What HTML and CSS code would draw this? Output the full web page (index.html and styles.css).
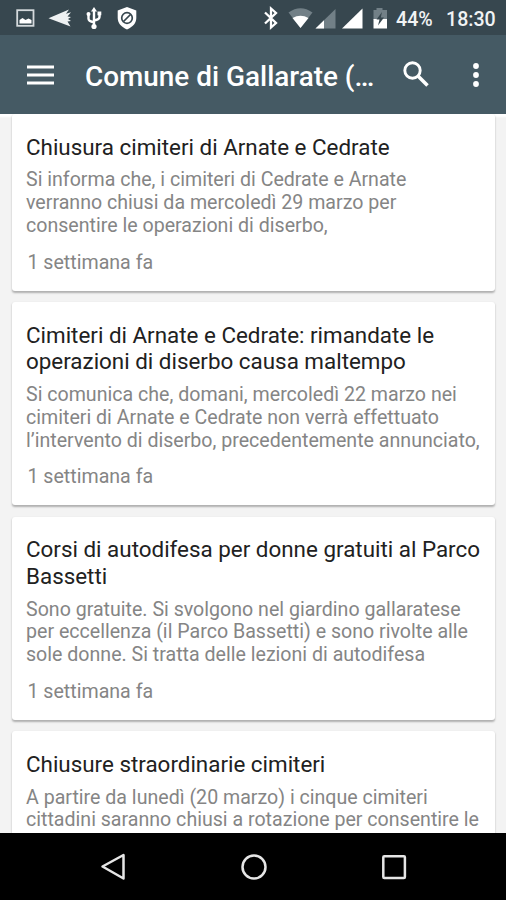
FILE: index.html
```html
<!DOCTYPE html>
<html lang="it">
<head>
<meta charset="utf-8">
<title>Comune di Gallarate</title>
<link rel="stylesheet" href="styles.css">
</head>
<body>
<div class="status">
  <svg class="status-icons" width="130" height="35" viewBox="0 0 130 35">
    <rect x="17.200" y="10.200" width="16.300" height="15.600" fill="none" stroke="#d5dadd" stroke-width="1.800"/>
    <path d="M19.500 23.500V20l3-2 3 2 3-1.500 3 1.500v3.500z" fill="#fff"/>
    <path d="M48.500 18.200L69 9.500l-3 4.200 5-1.500-3.500 4.300 3.500.5-3 2 3 2-3.500.5 3 5z" fill="#eef1f2"/>
    <g fill="none" stroke="#fff" stroke-width="2.400"><path d="M94 10v17M88.500 14.500v4.200q0 2.500 5.500 3.500M99.500 13v4q0 2.500-5.500 3.500"/></g>
    <g fill="#fff"><path d="M94 7l3 4.500h-6z"/><circle cx="88.500" cy="14" r="2"/><path d="M97.500 11.500h3.800v3.800h-3.800z"/><circle cx="94" cy="26.500" r="2.600"/></g>
    <path d="M127 7l9.300 3.500v7.500c0 5-3.500 9-9.300 11.500-5.800-2.500-9.300-6.500-9.300-11.500v-7.500z" fill="#fff"/>
    <circle cx="127" cy="18" r="5.300" fill="none" stroke="#37474f" stroke-width="1.700"/><path d="M123.500 21.500l7-7" stroke="#37474f" stroke-width="1.700"/>
  </svg>
  <svg class="status-icons" width="130" height="35" viewBox="260 0 130 35">
    <path d="M265 12.500l11 10.500-5 4.500V8.500l5 4.500-11 10.500" fill="none" stroke="#fff" stroke-width="2.300"/>
    <path d="M288.500 12.500q12-8.500 24 0l-12 15.500z" fill="#728087"/><path d="M292.500 18q8-4.500 16 0l-8 10z" fill="#fff"/>
    <path d="M315.500 28.500L335.500 9v19.500z" fill="#728087"/><path d="M315.500 28.500l8.500-8.300v8.300z" fill="#fff"/>
    <path d="M342 28.500L362.500 8.500v20z" fill="#fff"/>
    <path d="M373.500 10h3V8h6v2h4.500v10h-13.500z" fill="#728087"/><path d="M373.500 19h13.500v9.500h-13.500z" fill="#fff"/>
    <path d="M382 12l-5.500 7.500h3l-1.500 6 6-8h-3.200z" fill="#37474f"/>
  </svg>
  <span class="battery">44%</span><span class="clock">18:30</span>
</div>
<header class="toolbar">
  <svg class="menu" width="27" height="20" viewBox="0 0 27 20"><path d="M0 2h27M0 10h27M0 18h27" stroke="#fff" stroke-width="3"/></svg>
  <h1>Comune di Gallarate (…</h1>
  <svg class="search" width="27" height="27" viewBox="0 0 27 27" fill="none" stroke="#fff"><circle cx="9.500" cy="9.500" r="7.700" stroke-width="2.900"/><path d="M15 15l9.500 9.500" stroke-width="3.500"/></svg>
  <svg class="more" width="8" height="24" viewBox="0 0 8 24" fill="#fff"><circle cx="4" cy="3" r="2.900"/><circle cx="4" cy="12" r="2.900"/><circle cx="4" cy="21" r="2.900"/></svg>
</header>
<main class="list">
  <article class="card">
    <h2>Chiusura cimiteri di Arnate e Cedrate</h2>
    <p>Si informa che, i cimiteri di Cedrate e Arnate<br>verranno chiusi da mercoledì 29 marzo per<br>consentire le operazioni di diserbo,</p>
    <time>1 settimana fa</time>
  </article>
  <article class="card">
    <h2>Cimiteri di Arnate e Cedrate: rimandate le<br>operazioni di diserbo causa maltempo</h2>
    <p>Si comunica che, domani, mercoledì 22 marzo nei<br>cimiteri di Arnate e Cedrate non verrà effettuato<br>l’intervento di diserbo, precedentemente annunciato,</p>
    <time>1 settimana fa</time>
  </article>
  <article class="card">
    <h2>Corsi di autodifesa per donne gratuiti al Parco<br>Bassetti</h2>
    <p>Sono gratuite. Si svolgono nel giardino gallaratese<br>per eccellenza (il Parco Bassetti) e sono rivolte alle<br>sole donne. Si tratta delle lezioni di autodifesa</p>
    <time>1 settimana fa</time>
  </article>
  <article class="card">
    <h2>Chiusure straordinarie cimiteri</h2>
    <p>A partire da lunedì (20 marzo) i cinque cimiteri<br>cittadini saranno chiusi a rotazione per consentire le</p>
  </article>
</main>
<nav class="navbar">
  <svg width="28" height="28" viewBox="0 0 28 28"><path d="M3.500 13.500L24.500 2v23.500z"/></svg>
  <svg width="28" height="28" viewBox="0 0 28 28"><circle cx="14" cy="14" r="11.500"/></svg>
  <svg width="28" height="28" viewBox="0 0 28 28"><rect x="3.300" y="3.300" width="21.600" height="21.600" rx="1"/></svg>
</nav>
</body>
</html>
```

FILE: styles.css
```css
* { box-sizing: border-box; }
body {
  margin: 0;
  height: 900px;
  display: flex;
  flex-direction: column;
  overflow: hidden;
  background: #f3f3f3;
  font-family: Roboto, "Liberation Sans", sans-serif;
}
svg { display: block; flex: none; }
h1, h2, p { margin: 0; font-weight: 400; white-space: nowrap; }
.status {
  flex: none;
  height: 35px;
  display: flex;
  align-items: center;
  background: #37474f;
  color: #f1f3f4;
  font-size: 19.600px;
  font-weight: 500;
}
.status-icons { overflow: visible; }
.status-icons + .status-icons { margin-left: 130px; }
.battery { width: 50px; margin-left: 6px; padding-top: 3px; }
.clock { padding-top: 3px; }
.toolbar {
  flex: none;
  height: 79px;
  display: flex;
  align-items: center;
  padding-left: 26.500px;
  background: #455a64;
  color: #fff;
}
.toolbar h1 { width: 290px; margin: 3px 28px 0 31.500px; font-size: 27.900px; font-weight: 500; }
.more { margin-left: 42px; }
.list {
  flex: 1;
  min-height: 0;
  overflow: hidden;
  display: flex;
  flex-direction: column;
  gap: 11.500px;
  padding: 0 11px 0 12px;
  background: linear-gradient(#fff 2px, #f3f3f3 4px);
}
.card {
  flex: none;
  padding: 19.500px 14px 17px;
  border-radius: 3px;
  background: #fff;
  box-shadow: 0 1.500px 2px rgba(0, 0, 0, .28);
}
.card h2 { color: #212121; font-size: 22.400px; line-height: 26.600px; }
.card p { margin-top: 9.300px; color: #858585; font-size: 19.600px; line-height: 22.900px; }
.card time { display: block; margin-top: 12.400px; padding-left: 1.500px; color: #858585; font-size: 19.600px; line-height: 23px; }
.navbar {
  flex: none;
  height: 67px;
  display: flex;
  justify-content: center;
  align-items: center;
  gap: 112.500px;
  padding-left: 1px;
  background: #000;
}
.navbar svg { fill: none; stroke: #e6e6e6; stroke-width: 2.500; stroke-linejoin: round; }
```
